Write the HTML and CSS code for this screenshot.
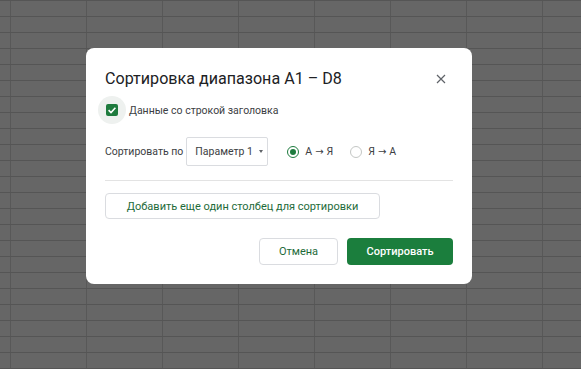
FILE: index.html
```html
<!DOCTYPE html>
<html lang="ru">
<head>
<meta charset="utf-8">
<title>Сортировка диапазона</title>
<link rel="stylesheet" href="styles.css">
</head>
<body>
<div class="sheet">
  <div class="dialog">
    <div class="title-row">
      <h1 class="title">Сортировка диапазона A1 – D8</h1>
      <span class="close">
        <svg width="10" height="10" viewBox="0 0 10 10"><path d="M1 1L9 9M9 1L1 9" stroke="#5f6368" stroke-width="1.2" fill="none"/></svg>
      </span>
    </div>
    <div class="check-row">
      <span class="halo"><span class="checkbox">
        <svg width="12" height="12" viewBox="0 0 12 12"><path d="M2.6 6.2L5 8.5L9.4 3.8" stroke="#fff" stroke-width="1.6" fill="none"/></svg>
      </span></span>
      <span class="label">Данные со строкой заголовка</span>
    </div>
    <div class="sort-row">
      <span class="label">Сортировать по</span>
      <span class="select">Параметр 1<span class="caret"></span></span>
      <span class="radio on"><span class="dot"></span></span>
      <span class="label radio-label">А<span class="arrow">→</span>Я</span>
      <span class="radio off"></span>
      <span class="label radio-label">Я<span class="arrow">→</span>А</span>
    </div>
    <div class="divider"></div>
    <div class="add-btn">Добавить еще один столбец для сортировки</div>
    <div class="footer">
      <span class="btn cancel">Отмена</span>
      <span class="btn primary">Сортировать</span>
    </div>
  </div>
</div>
</body>
</html>
```
FILE: styles.css
```css
html, body {
  margin: 0;
  padding: 0;
}
body {
  width: 581px;
  height: 369px;
  overflow: hidden;
  font-family: Roboto, "Liberation Sans", sans-serif;
}
.sheet {
  width: 581px;
  height: 369px;
  box-sizing: border-box;
  padding: 48px 0 0 86px;
  background-color: #666666;
  background-image:
    linear-gradient(to bottom, #555555 0, #555555 1px, transparent 1px),
    linear-gradient(to right, #585858 0, #585858 1px, transparent 1px);
  background-size: 100% 16px, 76px 100%;
  background-position: 0 0, 10px 0;
}
.dialog {
  width: 386px;
  height: 236px;
  box-sizing: border-box;
  padding: 19px 19px 19px 19px;
  background: #fff;
  border-radius: 8px;
  display: flex;
  flex-direction: column;
}
.title-row {
  height: 24px;
  display: flex;
  align-items: center;
  justify-content: space-between;
}
.title {
  margin: 0;
  font-size: 16.1px;
  font-weight: 400;
  color: #202124;
  line-height: 24px;
}
.close {
  width: 20px;
  height: 20px;
  margin-right: 2px;
  display: flex;
  align-items: center;
  justify-content: center;
}
.check-row {
  margin-top: 5px;
  height: 28px;
  display: flex;
  align-items: center;
}
.halo {
  width: 28px;
  height: 28px;
  margin-left: -7px;
  margin-right: 3px;
  border-radius: 50%;
  background: #eef1ef;
  display: flex;
  align-items: center;
  justify-content: center;
}
.checkbox {
  width: 12px;
  height: 12px;
  border-radius: 2px;
  background: #1e7b3e;
  display: flex;
}
.label {
  font-size: 10.5px;
  color: #3c4043;
  white-space: nowrap;
}
.sort-row {
  margin-top: 13px;
  height: 29px;
  display: flex;
  align-items: center;
}
.select {
  margin-left: 3px;
  width: 82px;
  height: 29px;
  box-sizing: border-box;
  border: 1px solid #dadce0;
  border-radius: 2px;
  padding-left: 8px;
  display: flex;
  align-items: center;
  font-size: 10.5px;
  color: #3c4043;
}
.caret {
  margin-left: 6px;
  width: 0;
  height: 0;
  border-left: 2.5px solid transparent;
  border-right: 2.5px solid transparent;
  border-top: 3px solid #5f6368;
}
.radio {
  width: 12px;
  height: 12px;
  box-sizing: border-box;
  border-radius: 50%;
  display: flex;
  align-items: center;
  justify-content: center;
}
.radio.on {
  margin-left: 19px;
  border: 1.5px solid #1e7b3e;
}
.radio.off {
  margin-left: 17px;
  border: 1px solid #c4c7c5;
}
.dot {
  width: 6px;
  height: 6px;
  border-radius: 50%;
  background: #1e7b3e;
}
.radio-label {
  margin-left: 6px;
}
.arrow {
  font-family: "DejaVu Sans", sans-serif;
  font-size: 10px;
  margin: 0 3px;
}
.divider {
  margin-top: 14px;
  height: 1px;
  background: #e3e3e3;
}
.add-btn {
  margin-top: 12px;
  width: 275px;
  height: 26px;
  box-sizing: border-box;
  border: 1px solid #dadce0;
  border-radius: 4px;
  display: flex;
  align-items: center;
  justify-content: center;
  font-size: 11px;
  color: #1e6b3a;
}
.footer {
  margin-top: 19px;
  display: flex;
  justify-content: flex-end;
  gap: 9px;
}
.btn {
  height: 27px;
  box-sizing: border-box;
  border-radius: 4px;
  display: flex;
  align-items: center;
  justify-content: center;
  font-size: 11px;
}
.cancel {
  width: 79px;
  border: 1px solid #dadce0;
  color: #1e6b3a;
}
.primary {
  width: 106px;
  background: #1b7e3d;
  color: #fff;
  font-weight: 500;
}
```
